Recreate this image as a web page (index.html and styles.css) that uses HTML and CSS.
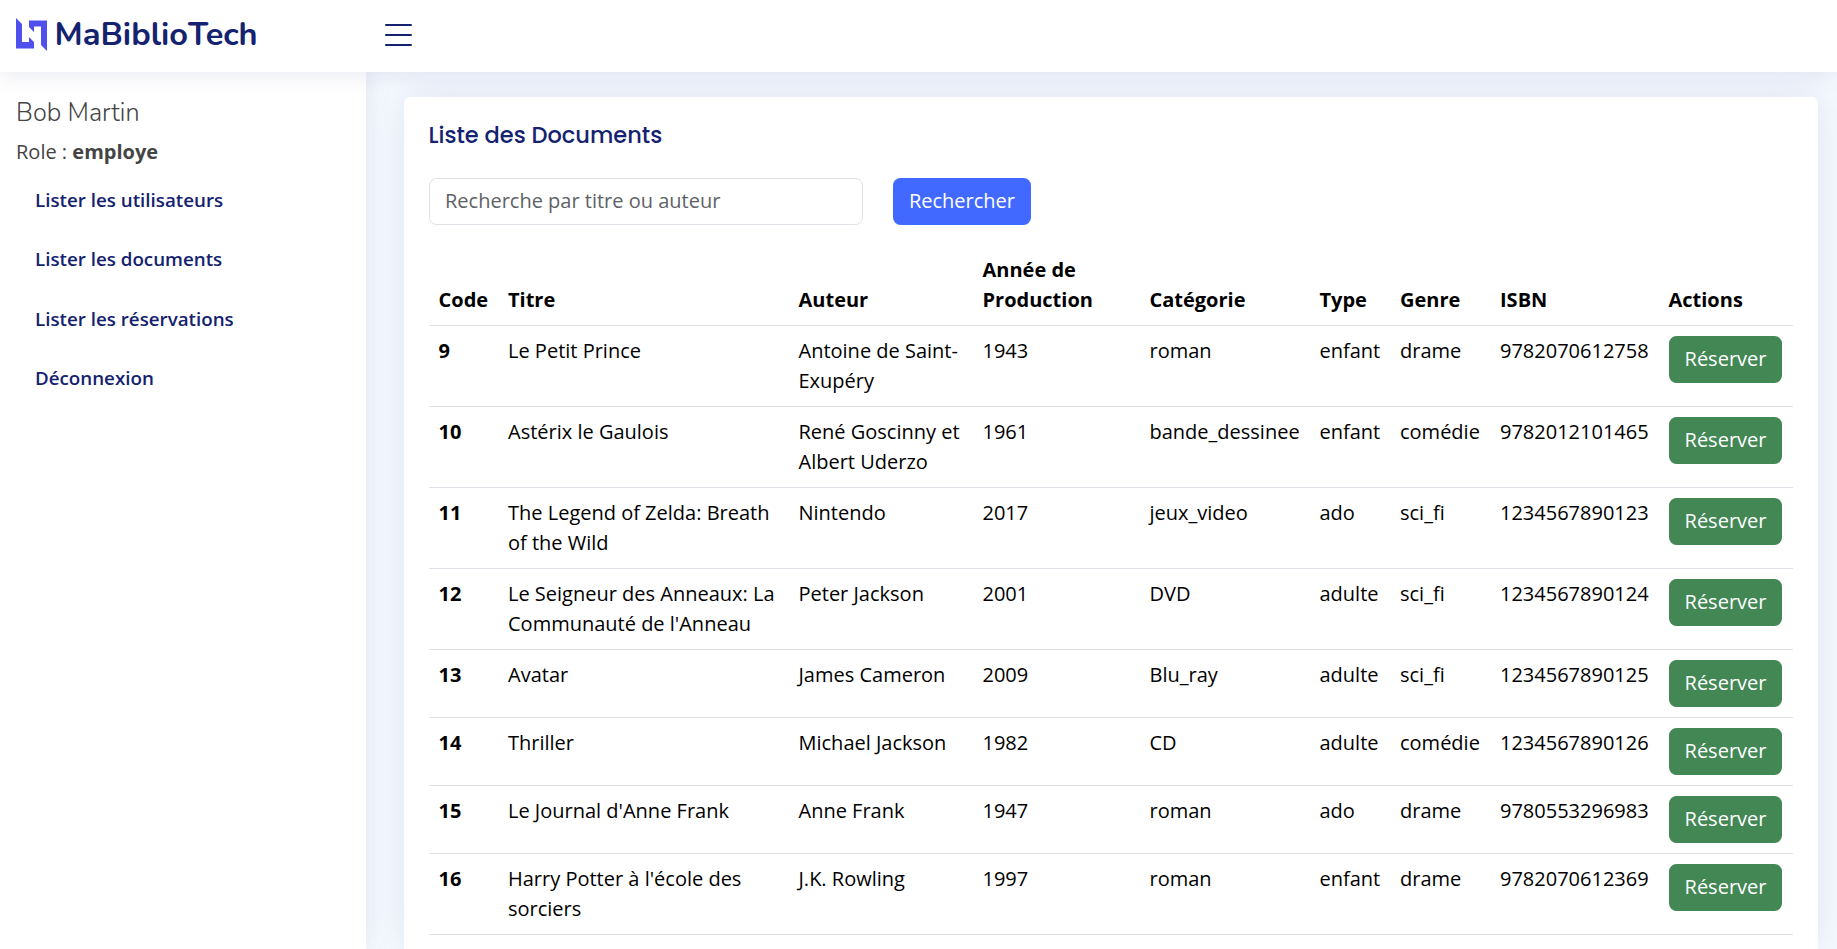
FILE: index.html
```html
<!DOCTYPE html>
<html lang="fr">
<head>
<meta charset="utf-8">
<title>MaBiblioTech</title>
<link rel="stylesheet" href="styles.css">
</head>
<body>
<header class="header">
  <a class="logo">
    <svg class="logo-mark" width="31" height="33" viewBox="0 0 31 33" fill="#4f4fee"><path d="M0 0L6 6V24H13V19L18 24V30.500H0Z"/><path d="M31 33L25 27V8.500H18V14L13 9V2.500H31Z"/></svg>
    <span class="brand">MaBiblioTech</span>
  </a>
  <svg class="toggle" width="28" height="24" viewBox="0 0 28 24" stroke="#14226f" stroke-width="2" stroke-linecap="round"><path d="M1 2H26M1 12H26M1 22H26"/></svg>
</header>
<div class="body">
  <aside class="sidebar">
    <h4 class="user">Bob Martin</h4>
    <p class="role">Role : <b>employe</b></p>
    <nav class="nav">
      <a class="nav-link">Lister les utilisateurs</a>
      <a class="nav-link">Lister les documents</a>
      <a class="nav-link">Lister les réservations</a>
      <a class="nav-link">Déconnexion</a>
    </nav>
  </aside>
  <main class="main">
    <section class="card">
      <h5 class="card-title"><span>Liste des Documents</span></h5>
      <form class="search">
        <input class="field" type="text" placeholder="Recherche par titre ou auteur">
        <button class="btn btn-primary" type="button">Rechercher</button>
      </form>
      <table class="table">
        <colgroup><col class="c-code"><col class="c-titre"><col class="c-auteur"><col class="c-annee"><col class="c-cat"><col class="c-type"><col class="c-genre"><col class="c-isbn"><col class="c-act"></colgroup>
        <thead><tr><th>Code</th><th>Titre</th><th>Auteur</th><th>Année de<br>Production</th><th>Catégorie</th><th>Type</th><th>Genre</th><th>ISBN</th><th>Actions</th></tr></thead>
        <tbody>
          <tr><th>9</th><td>Le Petit Prince</td><td>Antoine de Saint-<br>Exupéry</td><td>1943</td><td>roman</td><td>enfant</td><td>drame</td><td>9782070612758</td><td><button class="btn btn-success">Réserver</button></td></tr>
          <tr><th>10</th><td>Astérix le Gaulois</td><td>René Goscinny et<br>Albert Uderzo</td><td>1961</td><td>bande_dessinee</td><td>enfant</td><td>comédie</td><td>9782012101465</td><td><button class="btn btn-success">Réserver</button></td></tr>
          <tr><th>11</th><td>The Legend of Zelda: Breath<br>of the Wild</td><td>Nintendo</td><td>2017</td><td>jeux_video</td><td>ado</td><td>sci_fi</td><td>1234567890123</td><td><button class="btn btn-success">Réserver</button></td></tr>
          <tr><th>12</th><td>Le Seigneur des Anneaux: La<br>Communauté de l'Anneau</td><td>Peter Jackson</td><td>2001</td><td>DVD</td><td>adulte</td><td>sci_fi</td><td>1234567890124</td><td><button class="btn btn-success">Réserver</button></td></tr>
          <tr><th>13</th><td>Avatar</td><td>James Cameron</td><td>2009</td><td>Blu_ray</td><td>adulte</td><td>sci_fi</td><td>1234567890125</td><td><button class="btn btn-success">Réserver</button></td></tr>
          <tr><th>14</th><td>Thriller</td><td>Michael Jackson</td><td>1982</td><td>CD</td><td>adulte</td><td>comédie</td><td>1234567890126</td><td><button class="btn btn-success">Réserver</button></td></tr>
          <tr><th>15</th><td>Le Journal d'Anne Frank</td><td>Anne Frank</td><td>1947</td><td>roman</td><td>ado</td><td>drame</td><td>9780553296983</td><td><button class="btn btn-success">Réserver</button></td></tr>
          <tr><th>16</th><td>Harry Potter à l'école des<br>sorciers</td><td>J.K. Rowling</td><td>1997</td><td>roman</td><td>enfant</td><td>drame</td><td>9782070612369</td><td><button class="btn btn-success">Réserver</button></td></tr>
        </tbody>
      </table>
    </section>
  </main>
</div>
</body>
</html>
```
FILE: styles.css
```css
* { box-sizing: border-box; }
body {
  margin: 0;
  height: 949px;
  overflow: hidden;
  display: flex;
  flex-direction: column;
  background: #f5f9ff;
  font-family: "Open Sans", "Noto Sans", sans-serif;
  font-size: 20px;
  line-height: 30px;
  color: #000;
}
.header {
  position: relative;
  z-index: 2;
  flex: none;
  height: 72px;
  padding-left: 16px;
  display: flex;
  align-items: center;
  background: #fff;
  box-shadow: 0 2px 25px rgba(1, 30, 112, .1);
}
.logo { width: 369px; display: flex; align-items: center; padding-bottom: 3px; }
.logo-mark { flex: none; margin-right: 7.500px; }
.brand {
  margin-top: -2px;
  font-family: Nunito, "Open Sans", sans-serif;
  font-size: 32.500px;
  font-weight: 680;
  line-height: 40px;
  white-space: nowrap;
  color: #14226f;
}
.toggle { margin-top: -2px; }
.body { flex: 1; display: flex; min-height: 0; }
.sidebar {
  position: relative;
  z-index: 1;
  flex: none;
  width: 366px;
  padding: 26px 16px;
  background: #fff;
  box-shadow: 0 0 25px rgba(1, 30, 112, .1);
  color: #444;
}
.user {
  margin: 0;
  font-family: Nunito, "Open Sans", sans-serif;
  font-size: 25.200px;
  font-weight: 350;
  line-height: 30px;
}
.role { margin: 9px 0 0; }
.nav { display: flex; flex-direction: column; gap: 4.500px; margin-top: 5px; }
.nav-link {
  padding: 12.500px 19px;
  font-size: 18.750px;
  font-weight: 600;
  color: #14226f;
}
.main { flex: 1; display: flex; padding: 25px 19px 0 38px; min-width: 0; }
.card {
  flex: 1;
  padding: 0 25px;
  border-radius: 6px 6px 0 0;
  background: #fff;
  box-shadow: 0 0 37px rgba(1, 30, 112, .1);
}
.card-title {
  margin: 0 0 0 -.5px;
  padding: 25px 0 19px;
  height: 81px;
  font-family: Poppins, Inter, sans-serif;
  font-size: 22.500px;
  font-weight: 500;
  line-height: 27px;
  color: #14226f;
}
.search { display: flex; gap: 30px; margin-bottom: 20px; }
.field {
  width: 434px;
  height: 47px;
  padding: 6px 15px 8px;
  border: 1px solid #dee2e6;
  border-radius: 7.500px;
  font: inherit;
}
.field::placeholder { color: #5e6266; opacity: 1; }
.btn {
  display: block;
  height: 47px;
  padding: 0 0 2px;
  border: 0;
  border-radius: 7.500px;
  font: inherit;
  color: #fff;
}
.btn-primary { width: 138px; background: #4169ff; }
.btn-success { width: 113px; background: #438755; }
.table { width: 1364px; table-layout: fixed; border-collapse: separate; border-spacing: 0; }
.table th, .table td {
  padding: 10px 0 10px 9.500px;
  border-bottom: 1px solid #dee2e6;
  text-align: left;
  vertical-align: top;
  white-space: nowrap;
}
.table th:nth-child(2), .table td:nth-child(2),
.table th:nth-child(7), .table td:nth-child(7),
.table th:nth-child(8), .table td:nth-child(8),
.table td:last-child { padding-left: 10px; }
.table thead th { vertical-align: bottom; }
.c-code { width: 69px; }
.c-titre { width: 291px; }
.c-auteur { width: 184px; }
.c-annee { width: 167px; }
.c-cat { width: 170px; }
.c-type { width: 80px; }
.c-genre { width: 100px; }
.c-isbn { width: 169px; }
.c-act { width: 134px; }
```
